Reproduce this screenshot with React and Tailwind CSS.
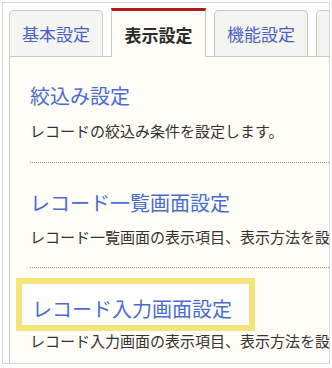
const font = { fontFamily: '"Noto Sans CJK JP", "Noto Sans", sans-serif' }

const tabs = [
  { label: '基本設定' },
  { label: '表示設定', active: true },
  { label: '機能設定' },
  { label: '詳細設定' },
]

const sections = [
  { title: '絞込み設定', desc: 'レコードの絞込み条件を設定します。', descMt: 'mt-[10px]', lineGap: 'mt-[21px] mb-[25px]' },
  { title: 'レコード一覧画面設定', desc: 'レコード一覧画面の表示項目、表示方法を設定します。', descMt: 'mt-[9px]', lineGap: 'mt-[20px] mb-[10px]' },
  { title: 'レコード入力画面設定', desc: 'レコード入力画面の表示項目、表示方法を設定します。', descMt: 'mt-0', highlight: true },
]

function Tab({ label, active }) {
  if (active) {
    return (
      <div className="relative z-10 -mb-px flex h-[49px] w-[95px] shrink-0 items-center justify-center border-x border-t-[3px] border-x-[#cfc8b2] border-t-[#b3191b] bg-[#fffdf7] pt-[1px] text-[17px] font-bold text-[#2b2b2b]">
        {label}
      </div>
    )
  }
  return (
    <div className="flex h-[46px] w-[94px] shrink-0 items-center justify-center rounded-t-[5px] border border-b-0 border-[#cfc8b2] bg-[#f4f4f2] pt-[1px] text-[17px] text-[#4a5fc8]">
      {label}
    </div>
  )
}

export default function App() {
  return (
    <div className="h-[368px] w-[332px] overflow-hidden bg-white p-[2px] pb-[4px]" style={font}>
      <div className="flex h-full flex-col overflow-hidden border border-[#d6d6d6] pl-[6px] pt-[5px]">
        <div className="flex items-end gap-[8px]">
          {tabs.map(t => <Tab key={t.label} {...t} />)}
        </div>
        <div className="flex-1 border-l border-t border-[#cfc8b2] bg-[#fffdf7] pl-[20px] pt-[24px]">
          {sections.map(s => (
            <div key={s.title}>
              {s.highlight ? (
                <div className="-ml-[14px] w-[239px] border-[6px] border-[#f5e47a] bg-white pl-[10px] pt-[10px] pb-[1px]">
                  <p className="whitespace-nowrap text-[20px] leading-[30px] text-[#4a6ccf]">{s.title}</p>
                </div>
              ) : (
                <p className="whitespace-nowrap text-[20px] leading-[30px] text-[#4a6ccf]">{s.title}</p>
              )}
              <p className={`whitespace-nowrap text-[15px] leading-[20px] text-[#333] ${s.descMt}`}>
                {s.desc}
              </p>
              {s.lineGap && (
                <div className={`border-t border-dotted border-[#999] ${s.lineGap}`} />
              )}
            </div>
          ))}
        </div>
      </div>
    </div>
  )
}
